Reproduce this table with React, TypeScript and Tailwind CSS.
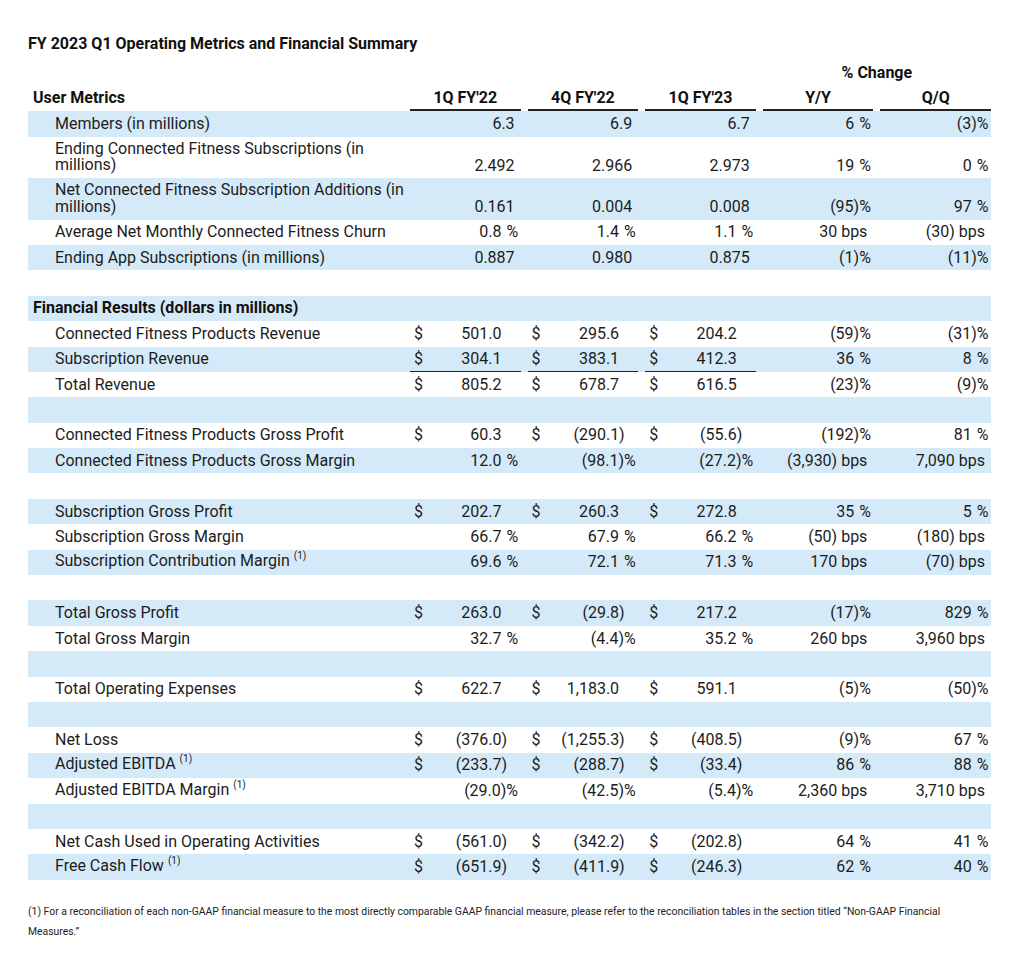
import React from "react";

type Row =
  | { t: "blank"; bg: boolean }
  | { t: "section"; label: string; bg: boolean }
  | {
      t: "data";
      label: React.ReactNode;
      bg: boolean;
      double?: boolean;
      under?: boolean;
      cells: string[];
    };

const Sup = () => (
  <span className="relative -top-[7px] ml-[4px] text-[10px]">(1)</span>
);

const rows: Row[] = [
  { t: "data", label: "Members (in millions)", bg: true, cells: ["6.3", "6.9", "6.7", "6 %", "(3)%"] },
  {
    t: "data",
    label: (
      <>
        Ending Connected Fitness Subscriptions (in
        <br />
        millions)
      </>
    ),
    bg: false,
    double: true,
    cells: ["2.492", "2.966", "2.973", "19 %", "0 %"],
  },
  {
    t: "data",
    label: (
      <>
        Net Connected Fitness Subscription Additions (in
        <br />
        millions)
      </>
    ),
    bg: true,
    double: true,
    cells: ["0.161", "0.004", "0.008", "(95)%", "97 %"],
  },
  { t: "data", label: "Average Net Monthly Connected Fitness Churn", bg: false, cells: ["0.8 %", "1.4 %", "1.1 %", "30 bps", "(30) bps"] },
  { t: "data", label: "Ending App Subscriptions (in millions)", bg: true, cells: ["0.887", "0.980", "0.875", "(1)%", "(11)%"] },
  { t: "blank", bg: false },
  { t: "section", label: "Financial Results (dollars in millions)", bg: true },
  { t: "data", label: "Connected Fitness Products Revenue", bg: false, cells: ["$501.0", "$295.6", "$204.2", "(59)%", "(31)%"] },
  { t: "data", label: "Subscription Revenue", bg: true, under: true, cells: ["$304.1", "$383.1", "$412.3", "36 %", "8 %"] },
  { t: "data", label: "Total Revenue", bg: false, cells: ["$805.2", "$678.7", "$616.5", "(23)%", "(9)%"] },
  { t: "blank", bg: true },
  { t: "data", label: "Connected Fitness Products Gross Profit", bg: false, cells: ["$60.3", "$(290.1)", "$(55.6)", "(192)%", "81 %"] },
  { t: "data", label: "Connected Fitness Products Gross Margin", bg: true, cells: ["12.0 %", "(98.1)%", "(27.2)%", "(3,930) bps", "7,090 bps"] },
  { t: "blank", bg: false },
  { t: "data", label: "Subscription Gross Profit", bg: true, cells: ["$202.7", "$260.3", "$272.8", "35 %", "5 %"] },
  { t: "data", label: "Subscription Gross Margin", bg: false, cells: ["66.7 %", "67.9 %", "66.2 %", "(50) bps", "(180) bps"] },
  {
    t: "data",
    label: (
      <>
        Subscription Contribution Margin
        <Sup />
      </>
    ),
    bg: true,
    cells: ["69.6 %", "72.1 %", "71.3 %", "170 bps", "(70) bps"],
  },
  { t: "blank", bg: false },
  { t: "data", label: "Total Gross Profit", bg: true, cells: ["$263.0", "$(29.8)", "$217.2", "(17)%", "829 %"] },
  { t: "data", label: "Total Gross Margin", bg: false, cells: ["32.7 %", "(4.4)%", "35.2 %", "260 bps", "3,960 bps"] },
  { t: "blank", bg: true },
  { t: "data", label: "Total Operating Expenses", bg: false, cells: ["$622.7", "$1,183.0", "$591.1", "(5)%", "(50)%"] },
  { t: "blank", bg: true },
  { t: "data", label: "Net Loss", bg: false, cells: ["$(376.0)", "$(1,255.3)", "$(408.5)", "(9)%", "67 %"] },
  {
    t: "data",
    label: (
      <>
        Adjusted EBITDA
        <Sup />
      </>
    ),
    bg: true,
    cells: ["$(233.7)", "$(288.7)", "$(33.4)", "86 %", "88 %"],
  },
  {
    t: "data",
    label: (
      <>
        Adjusted EBITDA Margin
        <Sup />
      </>
    ),
    bg: false,
    cells: ["(29.0)%", "(42.5)%", "(5.4)%", "2,360 bps", "3,710 bps"],
  },
  { t: "blank", bg: true },
  { t: "data", label: "Net Cash Used in Operating Activities", bg: false, cells: ["$(561.0)", "$(342.2)", "$(202.8)", "64 %", "41 %"] },
  {
    t: "data",
    label: (
      <>
        Free Cash Flow
        <Sup />
      </>
    ),
    bg: true,
    cells: ["$(651.9)", "$(411.9)", "$(246.3)", "62 %", "40 %"],
  },
];

function Cell({ v, under, double }: { v: string; under: boolean; double: boolean }) {
  const dollar = v.startsWith("$");
  const val = dollar ? v.slice(1) : v;
  let pr = "pr-[6px]";
  if (val.endsWith("%")) pr = "pr-[2.5px]";
  else if (val.endsWith("bps")) pr = "pr-[6px]";
  else if (dollar) pr = "pr-[13.5px]";
  const pad = dollar && !val.endsWith(")");
  const parts = val.endsWith(" %") ? [val.slice(0, -2), true] : [val, false];
  return (
    <div className="pl-[7px] h-full">
      <div
        className={
          "h-full flex leading-[20px] " +
          (double ? "items-end pb-[2.5px] " : "items-center ") +
          (under ? "border-b-[1.5px] border-[#222]" : "")
        }
      >
        {dollar && <span className="ml-[4px]">$</span>}
        <span className={"ml-auto whitespace-pre " + pr}>
          {parts[0] as string}
          {parts[1] && <span className="ml-[5px]">%</span>}
          {pad && <span className="invisible">)</span>}
        </span>
      </div>
    </div>
  );
}

export default function App() {
  const heads = ["1Q FY'22", "4Q FY'22", "1Q FY'23", "Y/Y", "Q/Q"];
  return (
    <div className="min-h-[968px] w-[1024px] bg-white text-[#1c1c1c] font-[Roboto,sans-serif] text-[16px]">
      <div className="ml-[28px] w-[963px] pt-[34px]">
        <h1 className="font-bold leading-[20px] text-[16px] text-[#111]">
          FY 2023 Q1 Operating Metrics and Financial Summary
        </h1>

        <div className="mt-[8.5px] grid grid-cols-[375px_repeat(5,117.6px)] h-[20px] leading-[20px] font-bold text-[#111]">
          <div className="col-start-5 col-span-2 pl-[7px] text-center">% Change</div>
        </div>

        <div className="grid grid-cols-[375px_repeat(5,117.6px)] h-[28.7px] items-end font-bold text-[#111]">
          <div className="pl-[5px] leading-[20px] pb-[3px]">User Metrics</div>
          {heads.map((h) => (
            <div key={h} className="pl-[7px]">
              <div className="border-b-2 border-[#222] text-center leading-[20px] pb-[1px]">{h}</div>
            </div>
          ))}
        </div>

        {rows.map((r, i) => {
          const bg = r.bg ? "bg-[#d5eaf9] " : "";
          if (r.t === "blank") {
            return <div key={i} className={bg + "h-[25.4px]"} />;
          }
          if (r.t === "section") {
            return (
              <div key={i} className={bg + "h-[25.4px] flex items-center pl-[5px] font-bold text-[#111] leading-[20px]"}>
                {r.label}
              </div>
            );
          }
          const double = !!r.double;
          return (
            <div
              key={i}
              className={
                bg +
                "grid grid-cols-[375px_repeat(5,117.6px)] " +
                (double ? "h-[41.5px]" : "h-[25.4px]")
              }
            >
              <div
                className={
                  "flex pl-[27px] whitespace-nowrap " +
                  (double ? "items-end pb-[4px] leading-[16.7px]" : "items-center leading-[20px]")
                }
              >
                <div>{r.label}</div>
              </div>
              {r.cells.map((c, j) => (
                <Cell key={j} v={c} under={!!r.under && j < 3} double={double} />
              ))}
            </div>
          );
        })}

        <p className="mt-[22.5px] text-[10.4px] leading-[20px] text-[#222] whitespace-nowrap">
          (1) For a reconciliation of each non-GAAP financial measure to the most directly comparable GAAP financial
          measure, please refer to the reconciliation tables in the section titled {"\u201C"}Non-GAAP Financial
          <br />
          Measures.{"\u201D"}
        </p>
      </div>
    </div>
  );
}
